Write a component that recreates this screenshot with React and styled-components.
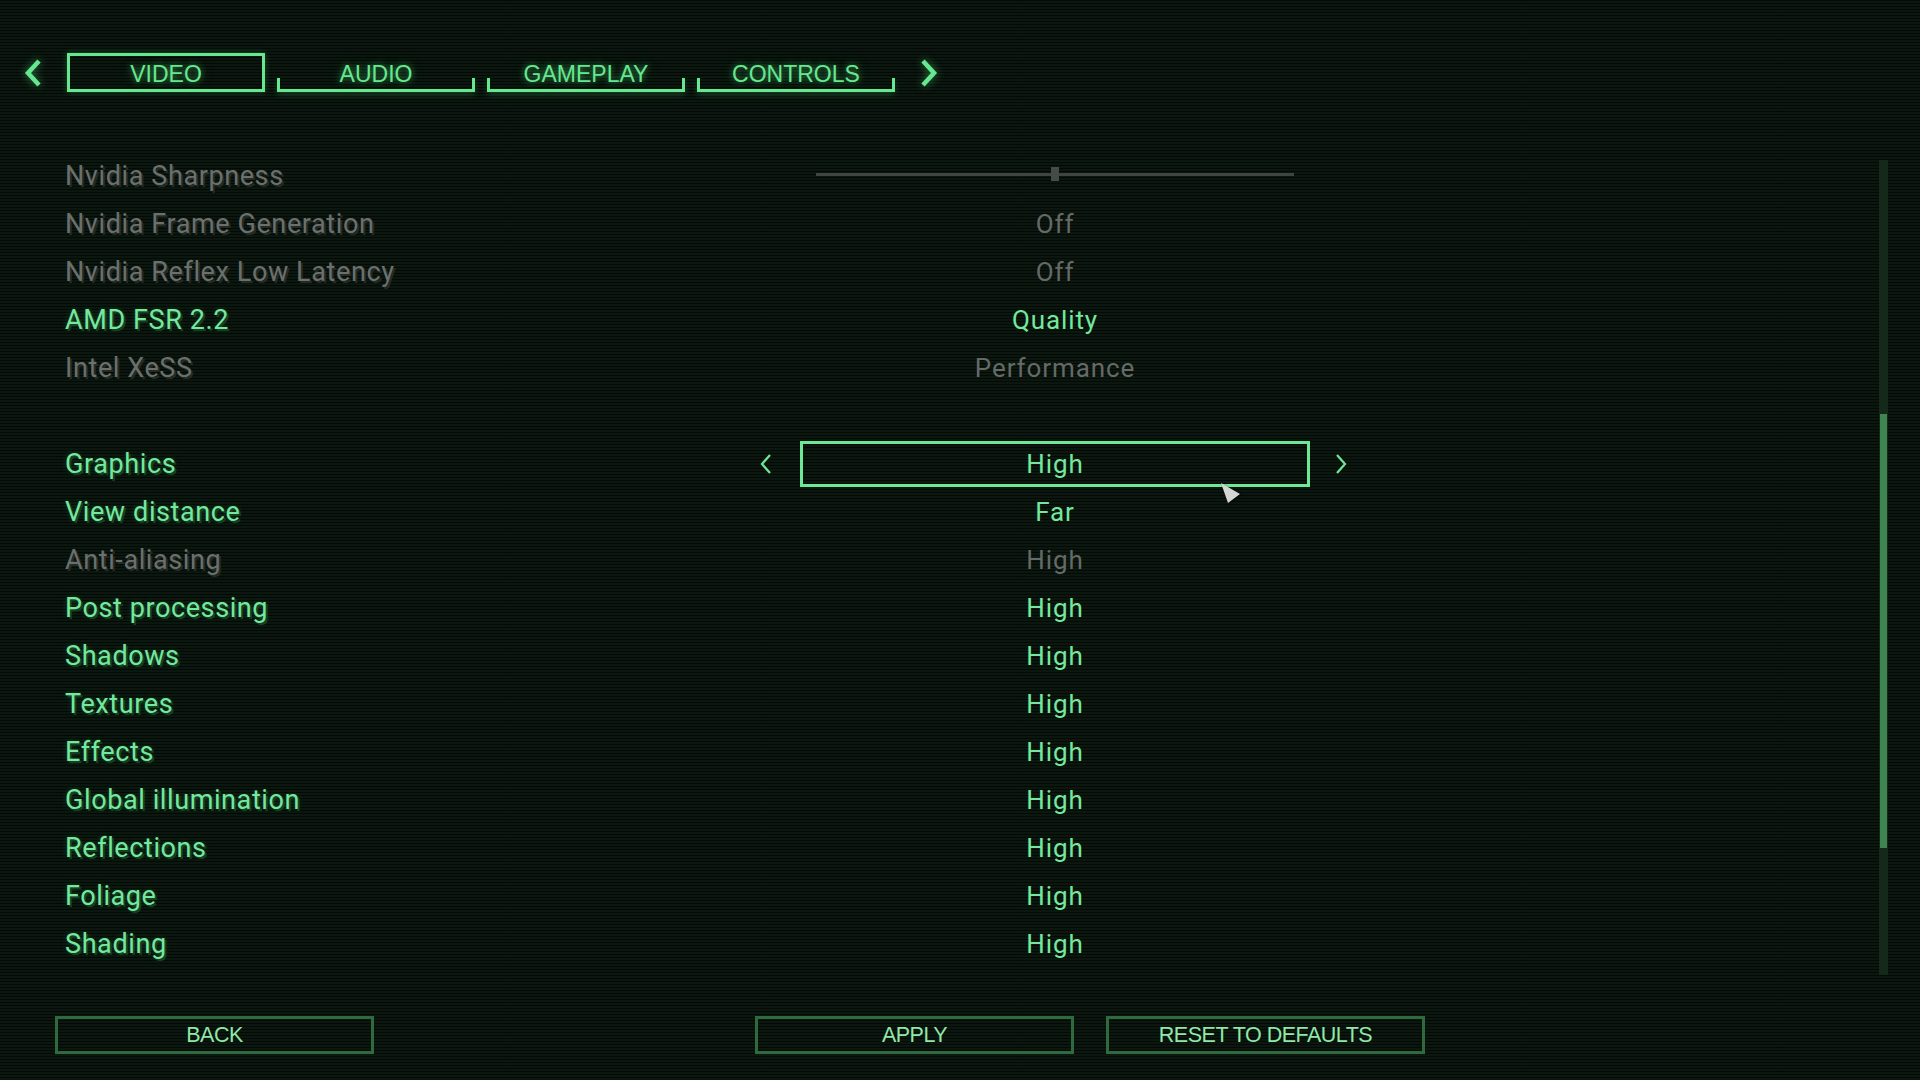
import React from "react";
import styled, { createGlobalStyle, css } from "styled-components";

const GREEN = "#66e890";
const MINT = "#74e89c";
const GREY = "#6b706c";

const Global = createGlobalStyle`
  html, body {
    margin: 0;
    padding: 0;
    background: #07100a;
  }
  body {
    width: 1920px;
    height: 1080px;
    overflow: hidden;
  }
`;

const Screen = styled.div`
  position: relative;
  width: 1920px;
  height: 1080px;
  display: flex;
  flex-direction: column;
  background-color: #07110b;
  background-image: repeating-linear-gradient(
    to bottom,
    rgba(3, 8, 5, 0.85) 0px,
    rgba(3, 8, 5, 0.85) 1px,
    rgba(14, 28, 18, 0.55) 1px,
    rgba(14, 28, 18, 0.55) 3px
  );
  font-family: Roboto, "Liberation Sans", sans-serif;
`;

const TabBar = styled.nav`
  display: flex;
  align-items: center;
  height: 39px;
  padding: 53px 0 0 23px;
`;

const BarArrow = styled.button`
  width: 20px;
  height: 28px;
  padding: 0;
  border: 0;
  background: none;
  display: flex;
  filter: drop-shadow(0 0 4px rgba(90, 230, 130, 0.55));
  margin: ${(p) => (p.$side === "left" ? "0 24px 0 0" : "0 0 0 24px")};
`;

const Tabs = styled.div`
  display: flex;
  gap: 12px;
`;

const Tab = styled.div`
  position: relative;
  width: 198px;
  height: 39px;
  box-sizing: border-box;
  display: flex;
  align-items: center;
  justify-content: center;
  padding-top: 3px;
  font-family: "Liberation Sans", Arial, sans-serif;
  font-size: 23px;
  color: ${GREEN};
  text-shadow: 0 0 6px rgba(90, 230, 130, 0.55), 0 0 14px rgba(90, 230, 130, 0.25);
  ${(p) =>
    p.$active
      ? css`
          border: 3px solid ${GREEN};
          box-shadow: 0 0 6px rgba(90, 230, 130, 0.3);
        `
      : css`
          &::after {
            content: "";
            position: absolute;
            left: 0;
            right: 0;
            bottom: 0;
            height: 11px;
            border: 3px solid ${GREEN};
            border-top: 0;
            box-shadow: 0 3px 6px rgba(90, 230, 130, 0.2);
          }
        `}
`;

const Main = styled.main`
  display: flex;
  margin-top: 60px;
  padding-right: 32px;
`;

const List = styled.div`
  flex: 1;
  display: flex;
  flex-direction: column;
  padding-left: 65px;
`;

const Row = styled.div`
  display: grid;
  grid-template-columns: 685px 50px 510px 50px;
  height: 48px;
  align-items: center;
`;

const Spacer = styled.div`
  height: 48px;
`;

const Label = styled.span`
  font-size: 27px;
  letter-spacing: 0.6px;
  color: ${(p) => (p.$off ? GREY : MINT)};
  text-shadow: ${(p) =>
    p.$off
      ? "2px 2px 0 rgba(38, 44, 40, 0.95)"
      : "2px 2px 0 rgba(22, 70, 40, 0.9), 0 0 6px rgba(100, 230, 140, 0.2)"};
`;

const ValueCell = styled.div`
  height: 46px;
  box-sizing: border-box;
  display: flex;
  align-items: center;
  justify-content: center;
  font-size: 26px;
  letter-spacing: 0.9px;
  color: ${(p) => (p.$off ? "#656a66" : MINT)};
  border: 3px solid ${(p) => (p.$selected ? "#6ee896" : "transparent")};
  padding: 0 13px;
`;

const SideArrow = styled.button`
  width: 12px;
  height: 22px;
  padding: 0;
  border: 0;
  background: none;
  display: flex;
  justify-self: ${(p) => (p.$side === "left" ? "end" : "start")};
  margin: ${(p) => (p.$side === "left" ? "0 28px 0 0" : "0 0 0 25px")};
`;

const Slider = styled.div`
  position: relative;
  width: 100%;
  height: 3px;
  background: #3f4641;
  margin-top: -4px;
`;

const SliderThumb = styled.div`
  position: absolute;
  top: -6px;
  width: 8px;
  height: 14px;
  background: #454b47;
  transform: translateX(-50%);
`;

const ScrollTrack = styled.div`
  position: relative;
  width: 9px;
  height: 815px;
  margin-top: 8px;
  background: #15291b;
`;

const ScrollThumb = styled.div`
  position: absolute;
  left: 1px;
  right: 1px;
  background: #3f8552;
`;

const Footer = styled.footer`
  display: flex;
  gap: 32px;
  margin-top: 41px;
  padding-left: 55px;
`;

const FooterButton = styled.button`
  width: 319px;
  height: 38px;
  box-sizing: border-box;
  margin-left: ${(p) => p.$offset || 0}px;
  background: transparent;
  border: 3px solid #2f6a3e;
  color: #8fe8a8;
  font-family: "Liberation Sans", Arial, sans-serif;
  font-size: 21.5px;
  letter-spacing: -0.5px;
  padding: 0;
`;

const Pointer = styled.svg`
  position: absolute;
  left: 1221px;
  top: 483px;
  filter: drop-shadow(1px 1px 1px rgba(0, 0, 0, 0.6));
`;

const BoldChevron = ({ dir }) => (
  <svg width="20" height="28" viewBox="0 0 20 28">
    <polyline
      points={dir === "left" ? "16,2 5,14 16,26" : "4,2 15,14 4,26"}
      fill="none"
      stroke={GREEN}
      strokeWidth="4.5"
    />
  </svg>
);

const ThinChevron = ({ dir }) => (
  <svg width="12" height="22" viewBox="0 0 12 22">
    <polyline
      points={dir === "left" ? "10,2 2,11 10,20" : "2,2 10,11 2,20"}
      fill="none"
      stroke="#6ee896"
      strokeWidth="2.2"
    />
  </svg>
);

const upscalers = [
  { label: "Nvidia Sharpness", slider: 0.5, off: true },
  { label: "Nvidia Frame Generation", value: "Off", off: true },
  { label: "Nvidia Reflex Low Latency", value: "Off", off: true },
  { label: "AMD FSR 2.2", value: "Quality" },
  { label: "Intel XeSS", value: "Performance", off: true },
];

const quality = [
  { label: "Graphics", value: "High", selected: true },
  { label: "View distance", value: "Far" },
  { label: "Anti-aliasing", value: "High", off: true },
  { label: "Post processing", value: "High" },
  { label: "Shadows", value: "High" },
  { label: "Textures", value: "High" },
  { label: "Effects", value: "High" },
  { label: "Global illumination", value: "High" },
  { label: "Reflections", value: "High" },
  { label: "Foliage", value: "High" },
  { label: "Shading", value: "High" },
];

const SettingRow = ({ item }) => (
  <Row>
    <Label $off={item.off}>{item.label}</Label>
    {item.selected ? (
      <SideArrow $side="left" aria-label="previous">
        <ThinChevron dir="left" />
      </SideArrow>
    ) : (
      <span />
    )}
    <ValueCell $off={item.off} $selected={item.selected}>
      {item.slider !== undefined ? (
        <Slider>
          <SliderThumb style={{ left: `${item.slider * 100}%` }} />
        </Slider>
      ) : (
        item.value
      )}
    </ValueCell>
    {item.selected ? (
      <SideArrow $side="right" aria-label="next">
        <ThinChevron dir="right" />
      </SideArrow>
    ) : (
      <span />
    )}
  </Row>
);

export default function App() {
  const scroll = { top: 254, height: 434 };
  return (
    <Screen>
      <Global />
      <TabBar>
        <BarArrow $side="left" aria-label="previous tab">
          <BoldChevron dir="left" />
        </BarArrow>
        <Tabs>
          <Tab $active>VIDEO</Tab>
          <Tab>AUDIO</Tab>
          <Tab>GAMEPLAY</Tab>
          <Tab>CONTROLS</Tab>
        </Tabs>
        <BarArrow $side="right" aria-label="next tab">
          <BoldChevron dir="right" />
        </BarArrow>
      </TabBar>

      <Main>
        <List>
          {upscalers.map((item) => (
            <SettingRow key={item.label} item={item} />
          ))}
          <Spacer />
          {quality.map((item) => (
            <SettingRow key={item.label} item={item} />
          ))}
        </List>
        <ScrollTrack>
          <ScrollThumb style={{ top: scroll.top, height: scroll.height }} />
        </ScrollTrack>
      </Main>

      <Footer>
        <FooterButton>BACK</FooterButton>
        <FooterButton $offset={349}>APPLY</FooterButton>
        <FooterButton>RESET TO DEFAULTS</FooterButton>
      </Footer>

      <Pointer width="22" height="22" viewBox="0 0 22 22">
        <polygon points="0,0 19,11 7,20" fill="#d4d6d4" />
      </Pointer>
    </Screen>
  );
}
